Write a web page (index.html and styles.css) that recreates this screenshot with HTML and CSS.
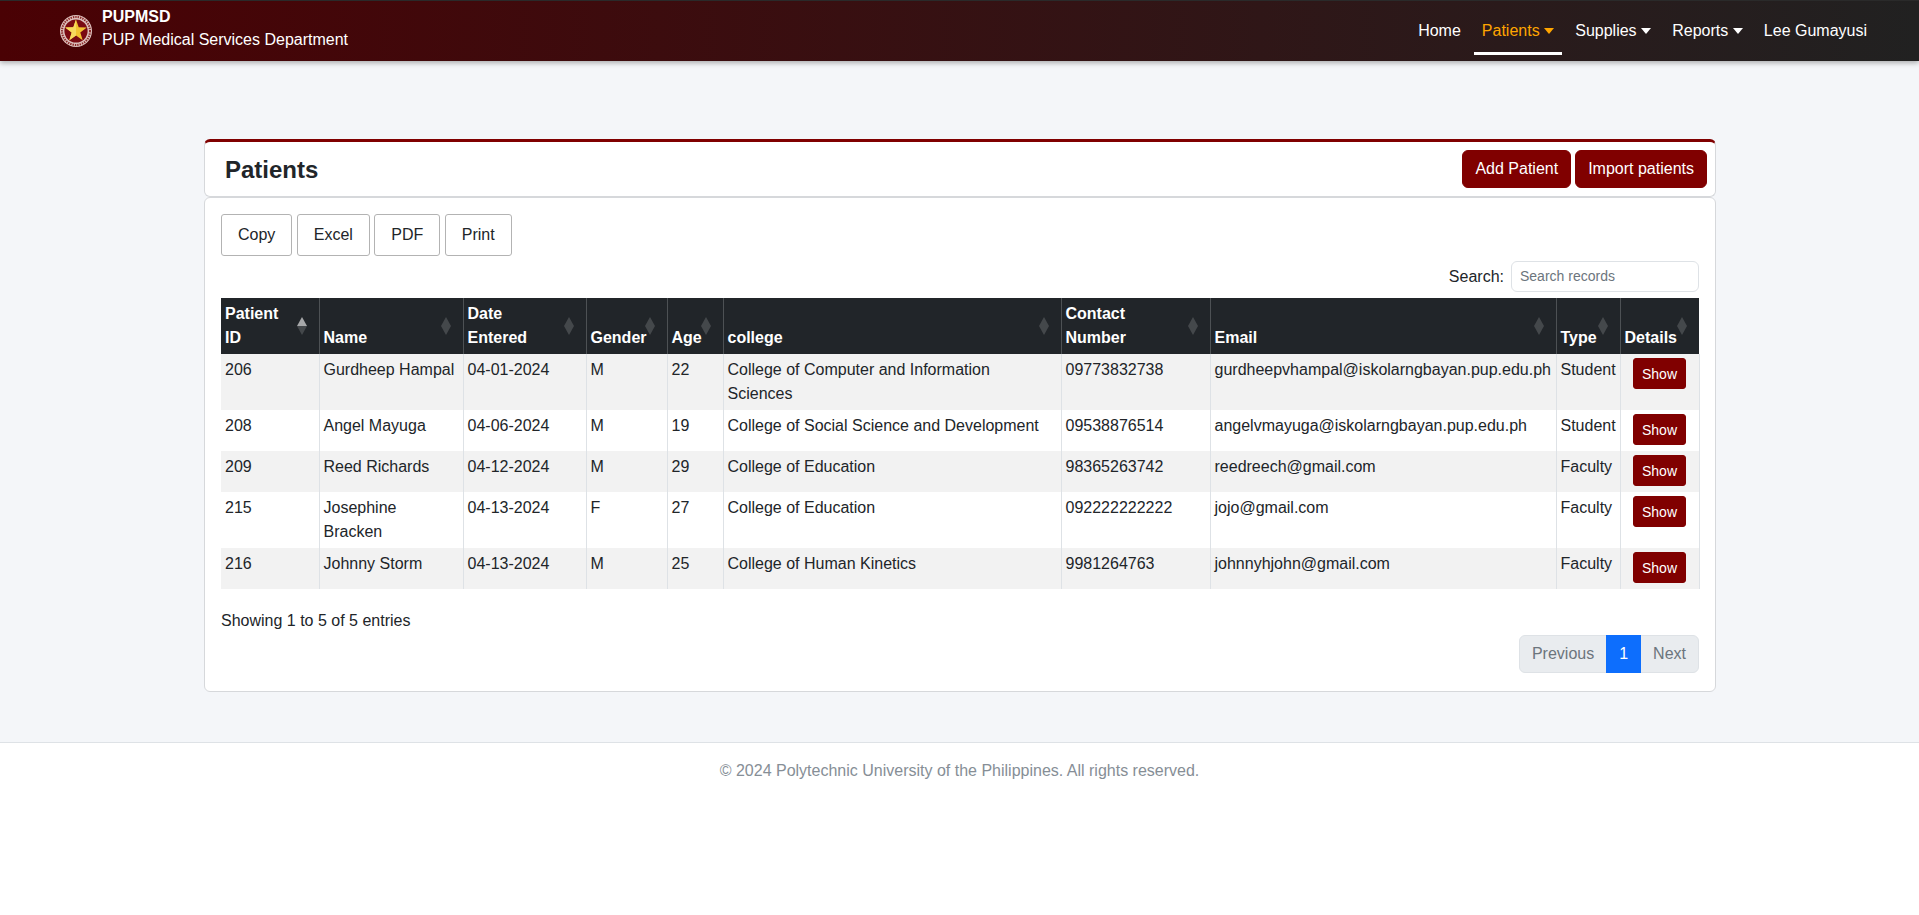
FILE: index.html
```html
<!DOCTYPE html>
<html lang="en">
<head>
<meta charset="utf-8">
<title>Patients</title>
<link rel="stylesheet" href="styles.css">
</head>
<body>
<header class="navbar">
  <a class="brand" href="#">
    <svg class="logo" viewBox="0 0 32 32" aria-hidden="true">
      <circle cx="16" cy="16" r="16" fill="#dcc0bc"/>
      <circle cx="16" cy="16" r="14" fill="none" stroke="#8a2a2a" stroke-width="2" stroke-dasharray="1.4 1"/>
      <circle cx="16" cy="16" r="12.2" fill="#dcc0bc"/>
      <circle cx="16" cy="16" r="11.6" fill="#7a0a12"/>
      <polygon points="16,4.6 18.7,12.3 26.8,12.5 20.3,17.4 22.7,25.2 16,20.6 9.3,25.2 11.7,17.4 5.2,12.5 13.3,12.3" fill="#f2c230"/>
      <polygon points="16,4.6 16,20.6 9.3,25.2 11.7,17.4 5.2,12.5 13.3,12.3" fill="#f7d95e"/>
    </svg>
    <span class="brand-text">
      <strong>PUPMSD</strong>
      <span>PUP Medical Services Department</span>
    </span>
  </a>
  <nav class="nav-links">
    <a class="nav-link" href="#">Home</a>
    <a class="nav-link active" href="#">Patients<i class="caret"></i></a>
    <a class="nav-link" href="#">Supplies<i class="caret"></i></a>
    <a class="nav-link" href="#">Reports<i class="caret"></i></a>
    <a class="nav-link" href="#">Lee Gumayusi</a>
  </nav>
</header>

<main class="content">
  <section class="card card-head">
    <h1>Patients</h1>
    <div class="head-actions">
      <button class="btn-maroon">Add Patient</button>
      <button class="btn-maroon">Import patients</button>
    </div>
  </section>

  <section class="card card-body">
    <div class="export-row">
      <button class="btn-export">Copy</button>
      <button class="btn-export">Excel</button>
      <button class="btn-export">PDF</button>
      <button class="btn-export">Print</button>
    </div>
    <div class="search-row">
      <label class="search-label" for="search">Search:</label>
      <input id="search" class="search-input" type="text" placeholder="Search records">
    </div>
    <table class="patients">
      <colgroup>
        <col class="c-id"><col class="c-name"><col class="c-date"><col class="c-gender"><col class="c-age"><col class="c-college"><col class="c-contact"><col class="c-email"><col class="c-type"><col class="c-details">
      </colgroup>
      <thead>
        <tr>
          <th class="sort-asc">Patient ID</th>
          <th>Name</th>
          <th>Date Entered</th>
          <th>Gender</th>
          <th>Age</th>
          <th>college</th>
          <th>Contact Number</th>
          <th>Email</th>
          <th>Type</th>
          <th>Details</th>
        </tr>
      </thead>
      <tbody>
        <tr>
          <td>206</td><td>Gurdheep Hampal</td><td>04-01-2024</td><td>M</td><td>22</td>
          <td>College of Computer and Information Sciences</td><td>09773832738</td>
          <td>gurdheepvhampal@iskolarngbayan.pup.edu.ph</td><td>Student</td>
          <td><button class="btn-show">Show</button></td>
        </tr>
        <tr>
          <td>208</td><td>Angel Mayuga</td><td>04-06-2024</td><td>M</td><td>19</td>
          <td>College of Social Science and Development</td><td>09538876514</td>
          <td>angelvmayuga@iskolarngbayan.pup.edu.ph</td><td>Student</td>
          <td><button class="btn-show">Show</button></td>
        </tr>
        <tr>
          <td>209</td><td>Reed Richards</td><td>04-12-2024</td><td>M</td><td>29</td>
          <td>College of Education</td><td>98365263742</td>
          <td>reedreech@gmail.com</td><td>Faculty</td>
          <td><button class="btn-show">Show</button></td>
        </tr>
        <tr>
          <td>215</td><td>Josephine Bracken</td><td>04-13-2024</td><td>F</td><td>27</td>
          <td>College of Education</td><td>092222222222</td>
          <td>jojo@gmail.com</td><td>Faculty</td>
          <td><button class="btn-show">Show</button></td>
        </tr>
        <tr>
          <td>216</td><td>Johnny Storm</td><td>04-13-2024</td><td>M</td><td>25</td>
          <td>College of Human Kinetics</td><td>9981264763</td>
          <td>johnnyhjohn@gmail.com</td><td>Faculty</td>
          <td><button class="btn-show">Show</button></td>
        </tr>
      </tbody>
    </table>
    <p class="info">Showing 1 to 5 of 5 entries</p>
    <div class="pager-row">
      <ul class="pager">
        <li class="page">Previous</li>
        <li class="page current">1</li>
        <li class="page">Next</li>
      </ul>
    </div>
  </section>
</main>

<footer class="footer">
  <p>© 2024 Polytechnic University of the Philippines. All rights reserved.</p>
</footer>
</body>
</html>
```

FILE: styles.css
```css
* { box-sizing: border-box; }

html, body { height: 100%; }

body {
  margin: 0;
  display: flex;
  flex-direction: column;
  min-height: 100vh;
  background: #f4f6f9;
  color: #212529;
  font-family: "Liberation Sans", Arial, sans-serif;
  font-size: 16px;
  line-height: 24px;
}

/* Navbar */
.navbar {
  flex: none;
  height: 61px;
  display: flex;
  justify-content: space-between;
  align-items: flex-start;
  padding: 0 44px 0 60px;
  background: linear-gradient(90deg, #4a0104 0%, #212121 100%);
  border-top: 1px solid #2a2a2a;
  box-shadow: 0 2px 5px rgba(0, 0, 0, .3);
  position: relative;
}

.brand {
  display: flex;
  align-items: center;
  gap: 10px;
  height: 60px;
  color: #fff;
  text-decoration: none;
}

.logo { width: 32px; height: 32px; flex: none; }

.brand-text {
  display: flex;
  flex-direction: column;
  line-height: 23px;
  margin-top: -6px;
}

.nav-links {
  display: flex;
  gap: 5px;
  padding-top: 5px;
}

.nav-link {
  height: 49px;
  padding: 13px 8px 0;
  color: #fff;
  text-decoration: none;
  border-bottom: 3px solid transparent;
  white-space: nowrap;
}

.nav-link.active {
  color: #ffa500;
  border-bottom-color: #fff;
}

.caret {
  display: inline-block;
  margin-left: 4.6px;
  vertical-align: 2px;
  border-top: 6px solid currentColor;
  border-left: 5.5px solid transparent;
  border-right: 5.5px solid transparent;
}

/* Main */
.content {
  flex: none;
  width: 1512px;
  margin: 78px 203px 50px 204px;
}

.card {
  background: #fff;
  border: 1px solid #d6d8db;
  border-radius: 6px;
}

.card-head {
  height: 58px;
  display: flex;
  justify-content: space-between;
  align-items: center;
  padding: 0 8px 0 20px;
  border-top: 3px solid #800000;
}

.card-head h1 {
  margin: 0;
  font-size: 24px;
  font-weight: 700;
  line-height: 29px;
}

.head-actions { display: flex; gap: 4px; }

button { font-family: inherit; cursor: pointer; }

.btn-maroon {
  height: 38px;
  padding: 0 12px;
  background: #800000;
  border: 1px solid #800000;
  border-radius: 6px;
  color: #fff;
  font-size: 16px;
}

.card-body {
  height: 495px;
  padding: 16px 16px 0;
}

.export-row { display: flex; gap: 4.45px; }

.btn-export {
  height: 42px;
  padding: 0 16px;
  background: #fff;
  border: 1px solid #b3b3b3;
  border-radius: 3px;
  color: #212529;
  font-size: 16px;
}

.search-row {
  display: flex;
  justify-content: flex-end;
  align-items: center;
  gap: 7px;
  margin-top: 5px;
}

.search-input {
  width: 188px;
  height: 31px;
  padding: 0 8px 2px;
  border: 1px solid #dee2e6;
  border-radius: 6px;
  font-family: inherit;
  font-size: 14px;
  color: #212529;
}

.search-input::placeholder { color: #6c757d; opacity: 1; }

/* Table */
.patients {
  width: 1478px;
  margin-top: 6px;
  table-layout: fixed;
  border-collapse: collapse;
}

.c-id { width: 98px; }
.c-name { width: 144px; }
.c-date { width: 123px; }
.c-gender { width: 81px; }
.c-age { width: 56px; }
.c-college { width: 338px; }
.c-contact { width: 149px; }
.c-email { width: 346px; }
.c-type { width: 64px; }
.c-details { width: 79px; }

.patients th {
  position: relative;
  padding: 4px 26px 4px 4px;
  background: #212529;
  color: #fff;
  font-weight: 700;
  text-align: left;
  vertical-align: bottom;
  border-right: 1px solid #4d5154;
}

.patients th:last-child { border-right: 0; }

.patients th::before,
.patients th::after {
  content: "";
  position: absolute;
  right: 12px;
  width: 0;
  height: 0;
  border-left: 5px solid transparent;
  border-right: 5px solid transparent;
  opacity: .16;
}

.patients th::before {
  top: calc(50% - 9px);
  border-bottom: 9px solid #fff;
}

.patients th::after {
  top: 50%;
  border-top: 9px solid #fff;
}

.patients th.sort-asc::before { opacity: .6; }

.patients td {
  padding: 4px;
  vertical-align: top;
  border-right: 1px solid #dee2e6;
}

.patients tbody tr:nth-child(odd) td { background: #f2f2f2; }

.patients td:last-child { padding: 4px 0 6px; }

.btn-show {
  display: block;
  width: 53px;
  height: 31px;
  margin: 0 auto;
  padding: 0;
  background: #800000;
  border: 1px solid #800000;
  border-radius: 3px;
  color: #fff;
  font-size: 14px;
}

.info { margin: 20px 0 0; }

.pager-row {
  display: flex;
  justify-content: flex-end;
  margin-top: 2px;
}

.pager {
  display: flex;
  margin: 0;
  padding: 0;
  list-style: none;
  height: 38px;
  border: 1px solid #dee2e6;
  border-radius: 6px;
  background: #e9ecef;
  color: #6c757d;
}

.page {
  padding: 6px 12px;
  margin: 0;
}

.page.current {
  margin: -1px 0;
  padding: 7px 13px;
  background: #0d6efd;
  color: #fff;
}

/* Footer */
.footer {
  flex: 1;
  background: #fff;
  border-top: 1px solid #dee2e6;
  text-align: center;
  color: #868e96;
  padding-top: 16px;
}

.footer p { margin: 0; }
```
